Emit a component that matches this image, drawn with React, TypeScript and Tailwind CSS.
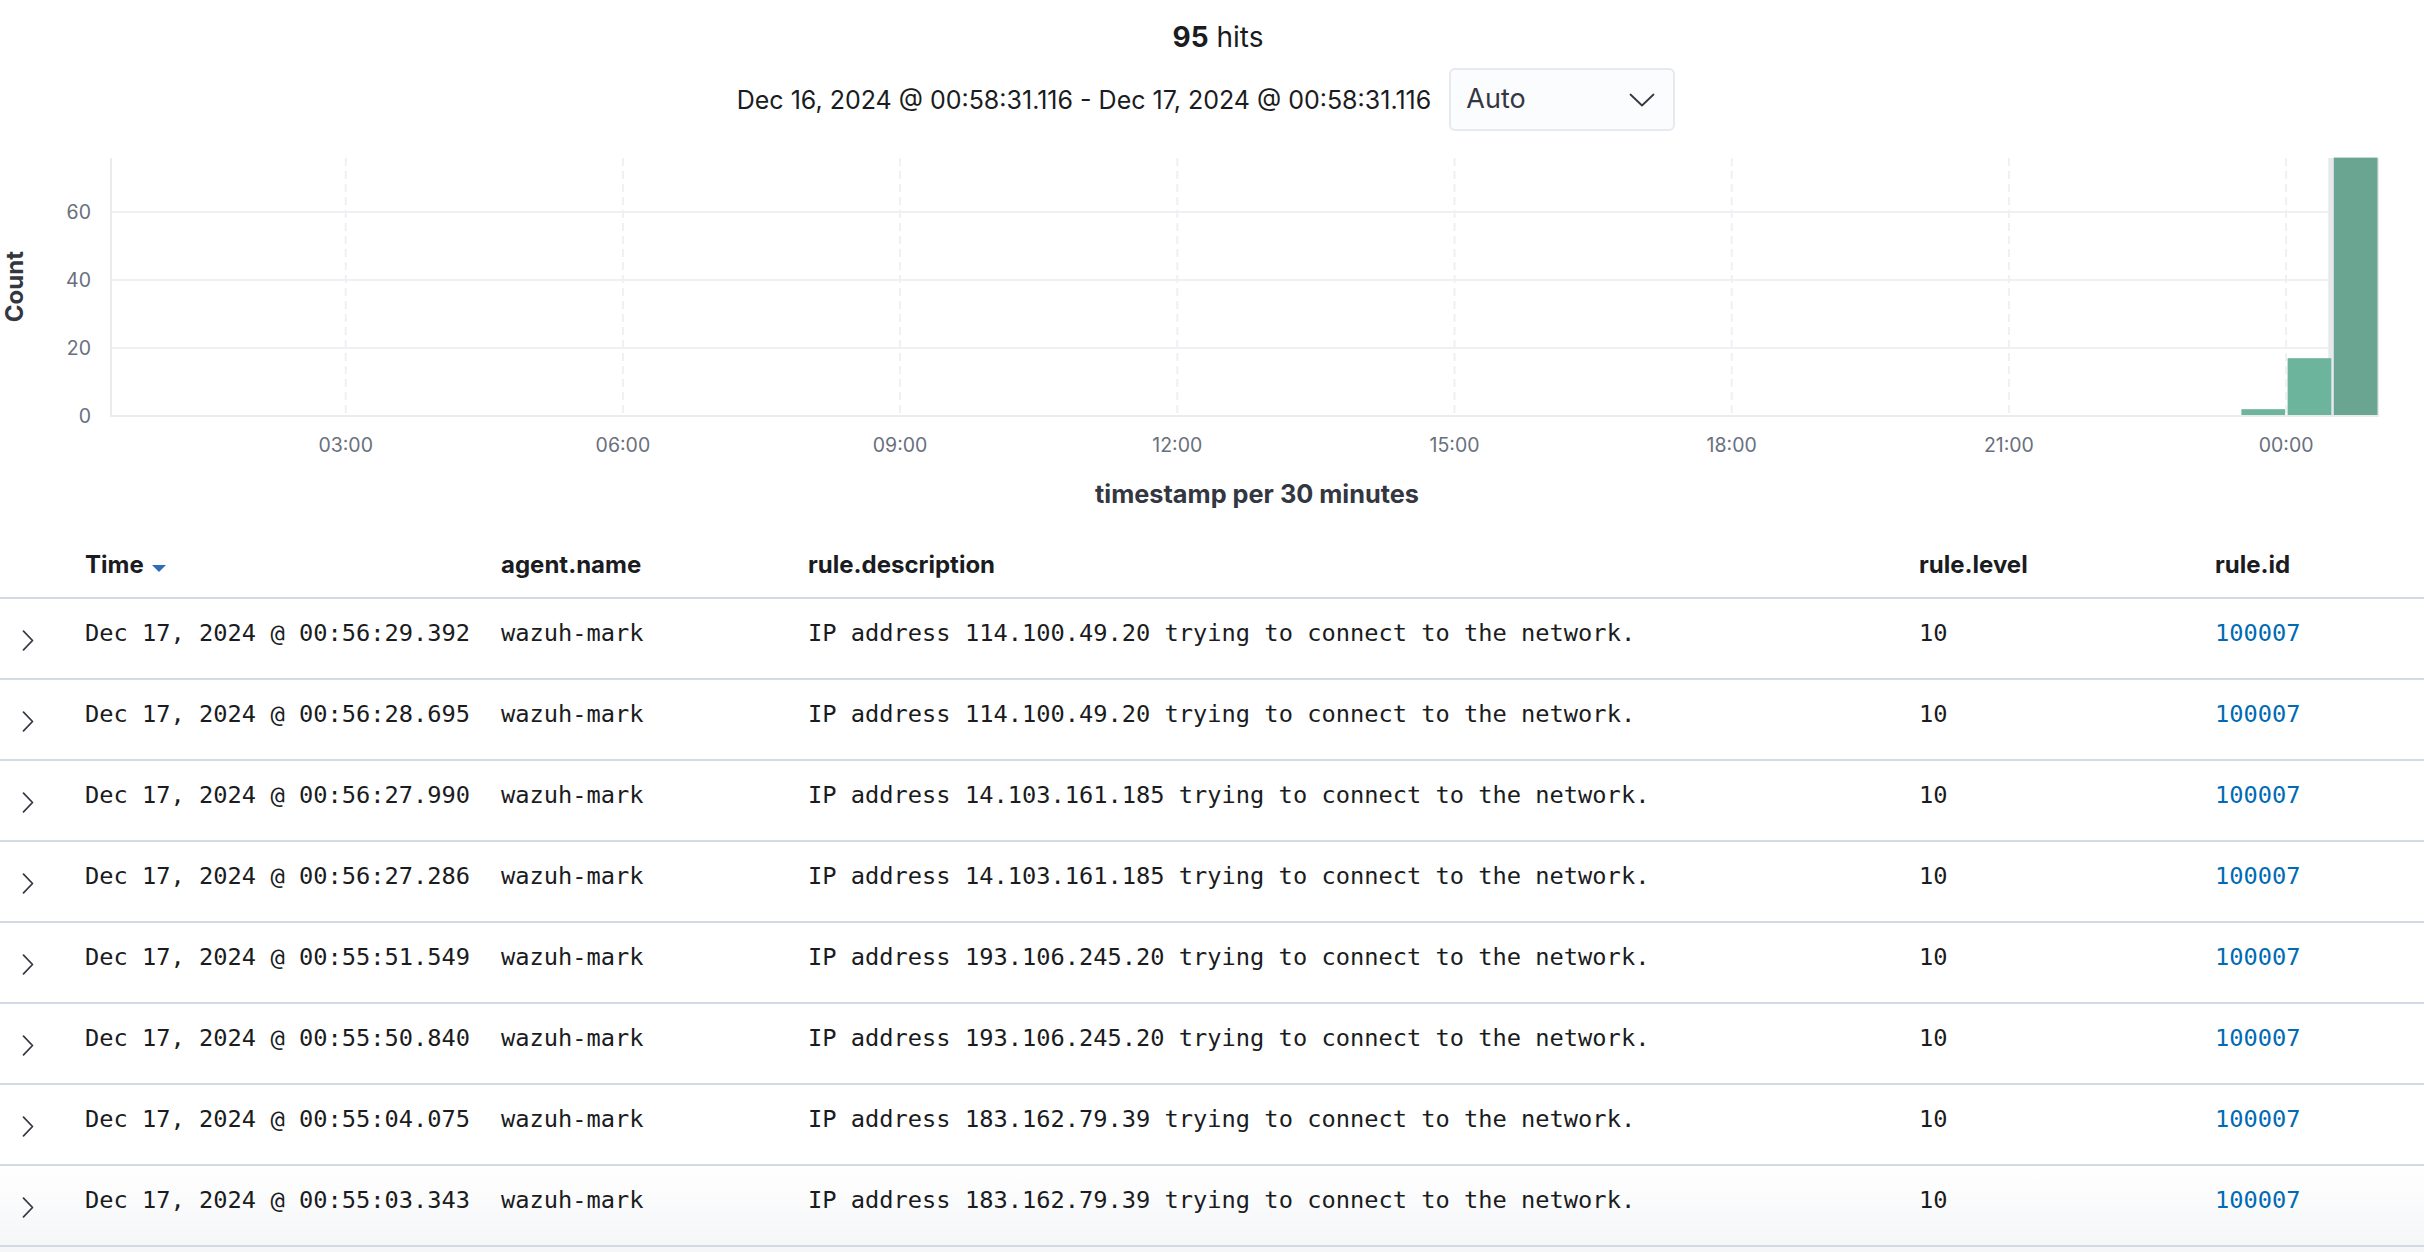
import React from "react";

const rows = [
  ["Dec 17, 2024 @ 00:56:29.392", "114.100.49.20"],
  ["Dec 17, 2024 @ 00:56:28.695", "114.100.49.20"],
  ["Dec 17, 2024 @ 00:56:27.990", "14.103.161.185"],
  ["Dec 17, 2024 @ 00:56:27.286", "14.103.161.185"],
  ["Dec 17, 2024 @ 00:55:51.549", "193.106.245.20"],
  ["Dec 17, 2024 @ 00:55:50.840", "193.106.245.20"],
  ["Dec 17, 2024 @ 00:55:04.075", "183.162.79.39"],
  ["Dec 17, 2024 @ 00:55:03.343", "183.162.79.39"],
];

const ticks = ["03:00", "06:00", "09:00", "12:00", "15:00", "18:00", "21:00", "00:00"];
const tick0 = 345.7;
const tickStep = 277.2;
const yZero = 416;
const perCount = 3.4;
const left = 111;
const right = 2379;

function Chart() {
  const gridVals = [20, 40, 60];
  const t00 = tick0 + tickStep * 7;
  const half = tickStep / 6;
  const bars = [
    { x: t00 - half, v: 2, c: "#6cb49b" },
    { x: t00, v: 17, c: "#6cb49b" },
    { x: t00 + half, v: 76, c: "#6aa592" },
  ];
  return (
    <svg
      width={2394}
      height={339}
      viewBox="30 131 2394 339"
      className="block"
      style={{ fontFamily: "Inter, 'Liberation Sans', sans-serif" }}
    >
      {gridVals.map((v) => (
        <line
          key={v}
          x1={left}
          x2={right}
          y1={yZero - v * perCount}
          y2={yZero - v * perCount}
          stroke="#eef0f4"
          strokeWidth={2}
        />
      ))}
      {ticks.map((t, i) => (
        <line
          key={t}
          x1={tick0 + tickStep * i}
          x2={tick0 + tickStep * i}
          y1={158}
          y2={yZero}
          stroke="#eef0f4"
          strokeWidth={2}
          strokeDasharray="8 5"
        />
      ))}
      <rect x={t00 + half - 4} y={158} width={right - (t00 + half - 4)} height={yZero - 158} fill="#e6e8ec" />
      {bars.map((b, i) => (
        <rect
          key={i}
          x={b.x + 1.5}
          y={yZero - b.v * perCount}
          width={half - 2.5}
          height={b.v * perCount}
          fill={b.c}
        />
      ))}
      <line x1={left} x2={left} y1={158} y2={yZero + 1} stroke="#e9ebef" strokeWidth={2} />
      <line x1={left} x2={right} y1={yZero} y2={yZero} stroke="#e9ebef" strokeWidth={2} />
      {[0, 20, 40, 60].map((v) => (
        <text
          key={v}
          x={91}
          y={yZero - v * perCount}
          textAnchor="end"
          dominantBaseline="central"
          fill="#69707d"
          fontSize={19.5}
        >
          {v}
        </text>
      ))}
      {ticks.map((t, i) => (
        <text
          key={t}
          x={tick0 + tickStep * i}
          y={445}
          textAnchor="middle"
          dominantBaseline="central"
          fill="#69707d"
          fontSize={19.5}
        >
          {t}
        </text>
      ))}
    </svg>
  );
}

function Chevron() {
  return (
    <svg width="12" height="21" viewBox="0 0 12 21" fill="none">
      <path d="M1.5 1.2 L10.5 10.5 L1.5 19.8" stroke="#343741" strokeWidth="1.7" strokeLinejoin="round" strokeLinecap="round" />
    </svg>
  );
}

export default function App() {
  const inter = { fontFamily: "Inter, 'Liberation Sans', sans-serif" };
  const mono = { fontFamily: "'DejaVu Sans Mono', 'Liberation Mono', monospace" };
  const cell = "flex items-center pb-[10px] text-[23.7px] whitespace-nowrap";
  return (
    <div className="w-[2424px] h-[1252px] bg-white overflow-hidden text-[#343741]" style={inter}>
      <div className="pt-[19px] h-[55px] flex justify-center">
        <div className="text-[28px] leading-[36px] text-[#1a1c21] pl-[12px]">
          <span className="font-bold">95</span> hits
        </div>
      </div>
      <div className="mt-[13px] flex justify-center items-center gap-[18px] pr-[12px]">
        <div className="text-[25px] leading-[32px] text-[#1a1c21]">
          Dec 16, 2024 @ 00:58:31.116 - Dec 17, 2024 @ 00:58:31.116
        </div>
        <div className="w-[226px] h-[63px] rounded-[6px] border-2 border-[#e6e9ef] bg-[#fbfcfd] flex items-center justify-between pl-[15px] pr-[18px]">
          <span className="text-[27px] text-[#343741]">Auto</span>
          <svg width="26" height="14" viewBox="0 0 26 14" fill="none">
            <path d="M1.5 1.5 L13 12.5 L24.5 1.5" stroke="#343741" strokeWidth="1.8" strokeLinejoin="round" strokeLinecap="round" />
          </svg>
        </div>
      </div>
      <div className="flex">
        <div className="w-[30px] flex items-center justify-center">
          <span className="font-bold text-[24px] text-[#343741] [writing-mode:vertical-rl] rotate-180 translate-y-[-14px]">
            Count
          </span>
        </div>
        <Chart />
      </div>
      <div className="h-[48px] flex justify-center items-center">
        <span className="font-bold text-[25.3px] text-[#343741] pl-[90px]">timestamp per 30 minutes</span>
      </div>
      <div className="grid grid-cols-[85px_416px_307px_1111px_296px_1fr] h-[81px] border-b-2 border-[#d3dae6] items-center pt-[14px] text-[24px] font-bold text-[#1a1c21]">
        <div />
        <div className="flex items-center gap-[8px]">
          <span>Time</span>
          <svg width="14" height="7" viewBox="0 0 14 7" className="mt-[8px]">
            <path d="M0 0 L14 0 L7 7 Z" fill="#2e6dbb" />
          </svg>
        </div>
        <div>agent.name</div>
        <div>rule.description</div>
        <div>rule.level</div>
        <div>rule.id</div>
      </div>
      {rows.map((r, i) => (
        <div
          key={i}
          className={
            "grid grid-cols-[85px_416px_307px_1111px_296px_1fr] h-[81px] border-b-2 border-[#d3dae6] " +
            (i === rows.length - 1 ? "bg-gradient-to-b from-white to-[#f5f6f8]" : "")
          }
        >
          <div className="flex items-center pl-[22px] pt-[3px]">
            <Chevron />
          </div>
          <div className={cell + " text-[#1a1c21]"} style={mono}>
            {r[0]}
          </div>
          <div className={cell + " text-[#1a1c21]"} style={mono}>
            wazuh-mark
          </div>
          <div className={cell + " text-[#1a1c21]"} style={mono}>
            IP address {r[1]} trying to connect to the network.
          </div>
          <div className={cell + " text-[#1a1c21]"} style={mono}>
            10
          </div>
          <div className={cell + " text-[#006bb4]"} style={mono}>
            100007
          </div>
        </div>
      ))}
      <div className="h-[10px] bg-[#f5f6f8]" />
    </div>
  );
}
